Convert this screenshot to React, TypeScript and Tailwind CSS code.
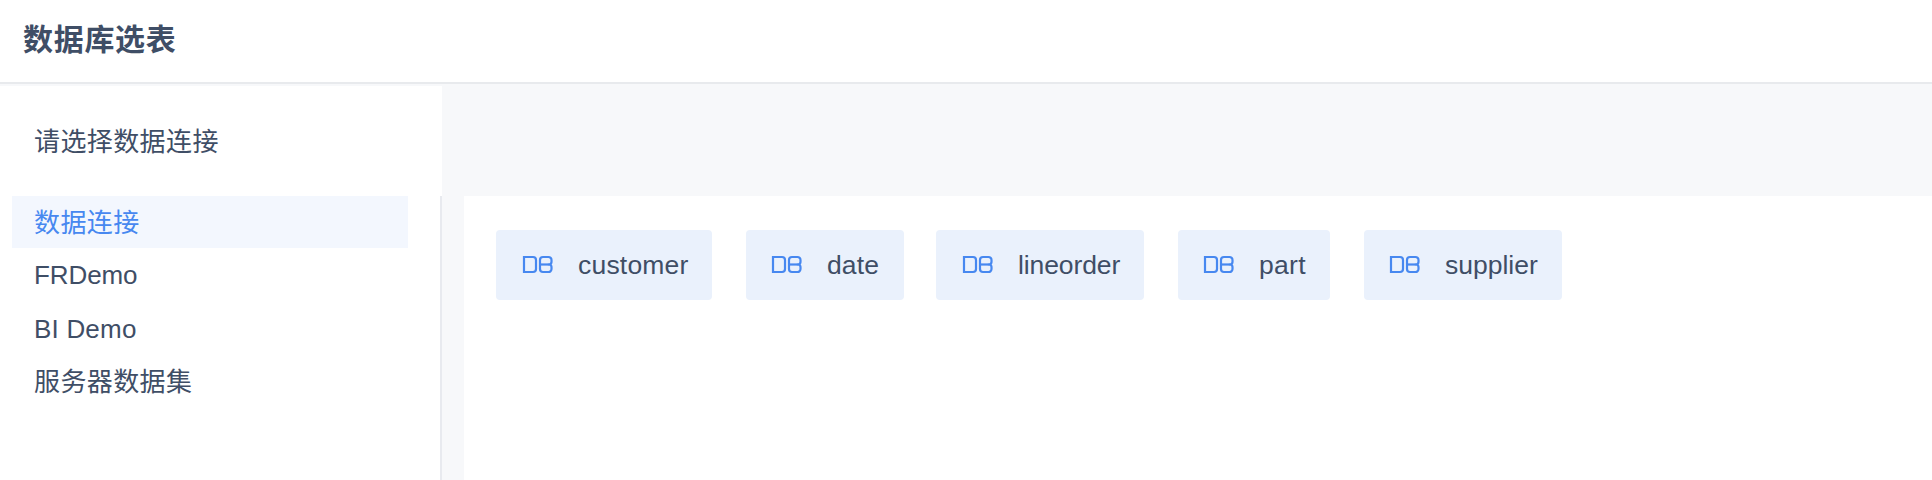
import React from 'react';

interface Connection {
  name: string;
  className: string;
}

interface Table {
  name: string;
  className: string;
}

const connections: Connection[] = [
  { name: '数据连接', className: 'h-[52px] pt-[3px] bg-[#f3f7fe] text-[#4788f0] tracking-[0.4px]' },
  { name: 'FRDemo', className: 'h-[54px] tracking-[-0.1px]' },
  { name: 'BI Demo', className: 'h-[54px] tracking-[0.2px]' },
  { name: '服务器数据集', className: 'h-[52px] tracking-[0.4px]' },
];

const tables: Table[] = [
  { name: 'customer', className: 'w-[216px] mr-[34px] pl-[26px] gap-[24px] tracking-[0.2px]' },
  { name: 'date', className: 'w-[158px] mr-[32px] pl-[25px] gap-[24px] tracking-[0.1px]' },
  { name: 'lineorder', className: 'w-[208px] mr-[34px] pl-[26px] gap-[24px] tracking-[-0.1px]' },
  { name: 'part', className: 'w-[152px] mr-[34px] pl-[25px] gap-[24px] tracking-[0.3px]' },
  { name: 'supplier', className: 'w-[198px] pl-[25px] gap-[24px] tracking-[0px]' },
];

const DbIcon = () => (
  <svg className="w-[32px] h-[20px] mb-[2px] flex-shrink-0" viewBox="0 0 32 20" fill="none" stroke="#4788f0" strokeWidth="2.2">
    <path d="M2 3h9a3 3 0 0 1 3 3v9a3 3 0 0 1-3 3H2z" />
    <path d="M21 3h5.5a3 3 0 0 1 3 3v1.8a2.7 2.7 0 0 1-2 2.7 2.7 2.7 0 0 1 2 2.7V15a3 3 0 0 1-3 3H21a3 3 0 0 1-3-3V6a3 3 0 0 1 3-3z" />
    <path d="M18 10.5h9.5" />
  </svg>
);

const App: React.FC = () => {
  return (
    <div className="flex flex-col w-[1932px] h-[480px] overflow-hidden bg-[#f7f8fa] text-[#3f4e66] text-[26px] font-['Liberation_Sans','Noto_Sans_CJK_SC',sans-serif]">
      <header className="flex items-center h-[84px] flex-shrink-0 pl-[23px] pb-[3px] bg-white border-b-2 border-[#e8eaed]">
        <h1 className="text-[30px] font-bold tracking-[0.7px]">数据库选表</h1>
      </header>

      <div className="flex flex-1 pt-[2px]">
        <aside className="flex flex-col w-[442px] flex-shrink-0 bg-white">
          <div className="flex items-center h-[110px] pl-[34px] pt-[2px] tracking-[0.4px]">请选择数据连接</div>
          <ul className="flex-1 pl-[12px] pr-[32px] border-r-2 border-[#e8eaef]">
            {connections.map(item => (
              <li key={item.name} className={`flex items-center pl-[22px] ${item.className}`}>
                {item.name}
              </li>
            ))}
          </ul>
        </aside>

        <main className="flex flex-1 items-start mt-[110px] ml-[22px] pt-[34px] pl-[32px] bg-white">
          {tables.map(table => (
            <div
              key={table.name}
              className={`flex items-center h-[70px] flex-shrink-0 rounded bg-[#eaf1fc] ${table.className}`}
            >
              <DbIcon />
              <span className="pt-[2px] text-[26.5px]">{table.name}</span>
            </div>
          ))}
        </main>
      </div>
    </div>
  );
};

export default App;
